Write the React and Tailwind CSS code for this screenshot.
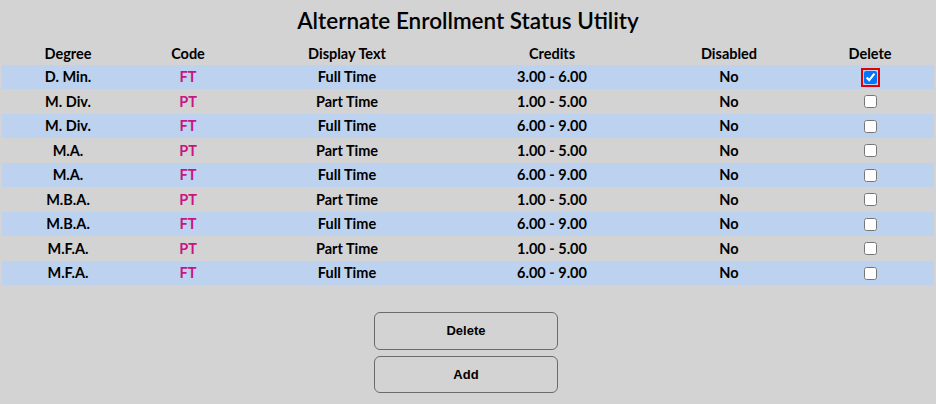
import React from "react";

const rows = [
  { degree: "D. Min.", code: "FT", text: "Full Time", credits: "3.00 - 6.00", checked: true },
  { degree: "M. Div.", code: "PT", text: "Part Time", credits: "1.00 - 5.00" },
  { degree: "M. Div.", code: "FT", text: "Full Time", credits: "6.00 - 9.00" },
  { degree: "M.A.", code: "PT", text: "Part Time", credits: "1.00 - 5.00" },
  { degree: "M.A.", code: "FT", text: "Full Time", credits: "6.00 - 9.00" },
  { degree: "M.B.A.", code: "PT", text: "Part Time", credits: "1.00 - 5.00" },
  { degree: "M.B.A.", code: "FT", text: "Full Time", credits: "6.00 - 9.00" },
  { degree: "M.F.A.", code: "PT", text: "Part Time", credits: "1.00 - 5.00" },
  { degree: "M.F.A.", code: "FT", text: "Full Time", credits: "6.00 - 9.00" },
];

const cols = "grid grid-cols-[132px_108px_210px_200px_154px_128px] items-center text-center";

const App = () => {
  return (
    <div className="w-[936px] h-[404px] bg-[#d3d3d3] text-black font-['Lato',sans-serif] overflow-hidden">
      {/* title */}
      <h1 className="h-[42px] pt-[6px] text-center text-[22.5px] font-semibold leading-[30px]">
        Alternate Enrollment Status Utility
      </h1>

      {/* table */}
      <div className="px-[2px]">
        <div className={`${cols} h-[23px] text-[14.5px] font-bold`}>
          <div>Degree</div>
          <div>Code</div>
          <div>Display Text</div>
          <div>Credits</div>
          <div>Disabled</div>
          <div>Delete</div>
        </div>

        {rows.map((r, i) => (
          <div
            key={i}
            className={`${cols} text-[14.5px] font-bold ${i % 2 === 0 ? "bg-[#bcd2ee] h-[24px]" : "h-[25px]"}`}
          >
            <div>{r.degree}</div>
            <div className="text-[#c71585]">{r.code}</div>
            <div>{r.text}</div>
            <div>{r.credits}</div>
            <div>No</div>
            <div className="flex justify-center">
              <input
                type="checkbox"
                defaultChecked={r.checked}
                className={`m-0 w-[13px] h-[13px] ${r.checked ? "outline-2 outline-[#e00000] outline-offset-1" : ""}`}
              />
            </div>
          </div>
        ))}
      </div>

      {/* buttons */}
      <div className="flex flex-col gap-[6px] mt-[27px] pl-[374px] font-['Liberation_Sans',Arial,sans-serif] text-[13px] font-bold">
        <button className="w-[184px] h-[38px] border border-[#6b6b6b] rounded-[6px] bg-[#d3d3d3]">
          Delete
        </button>
        <button className="w-[184px] h-[37px] border border-[#6b6b6b] rounded-[6px] bg-[#d3d3d3]">
          Add
        </button>
      </div>
    </div>
  );
};

export default App;
